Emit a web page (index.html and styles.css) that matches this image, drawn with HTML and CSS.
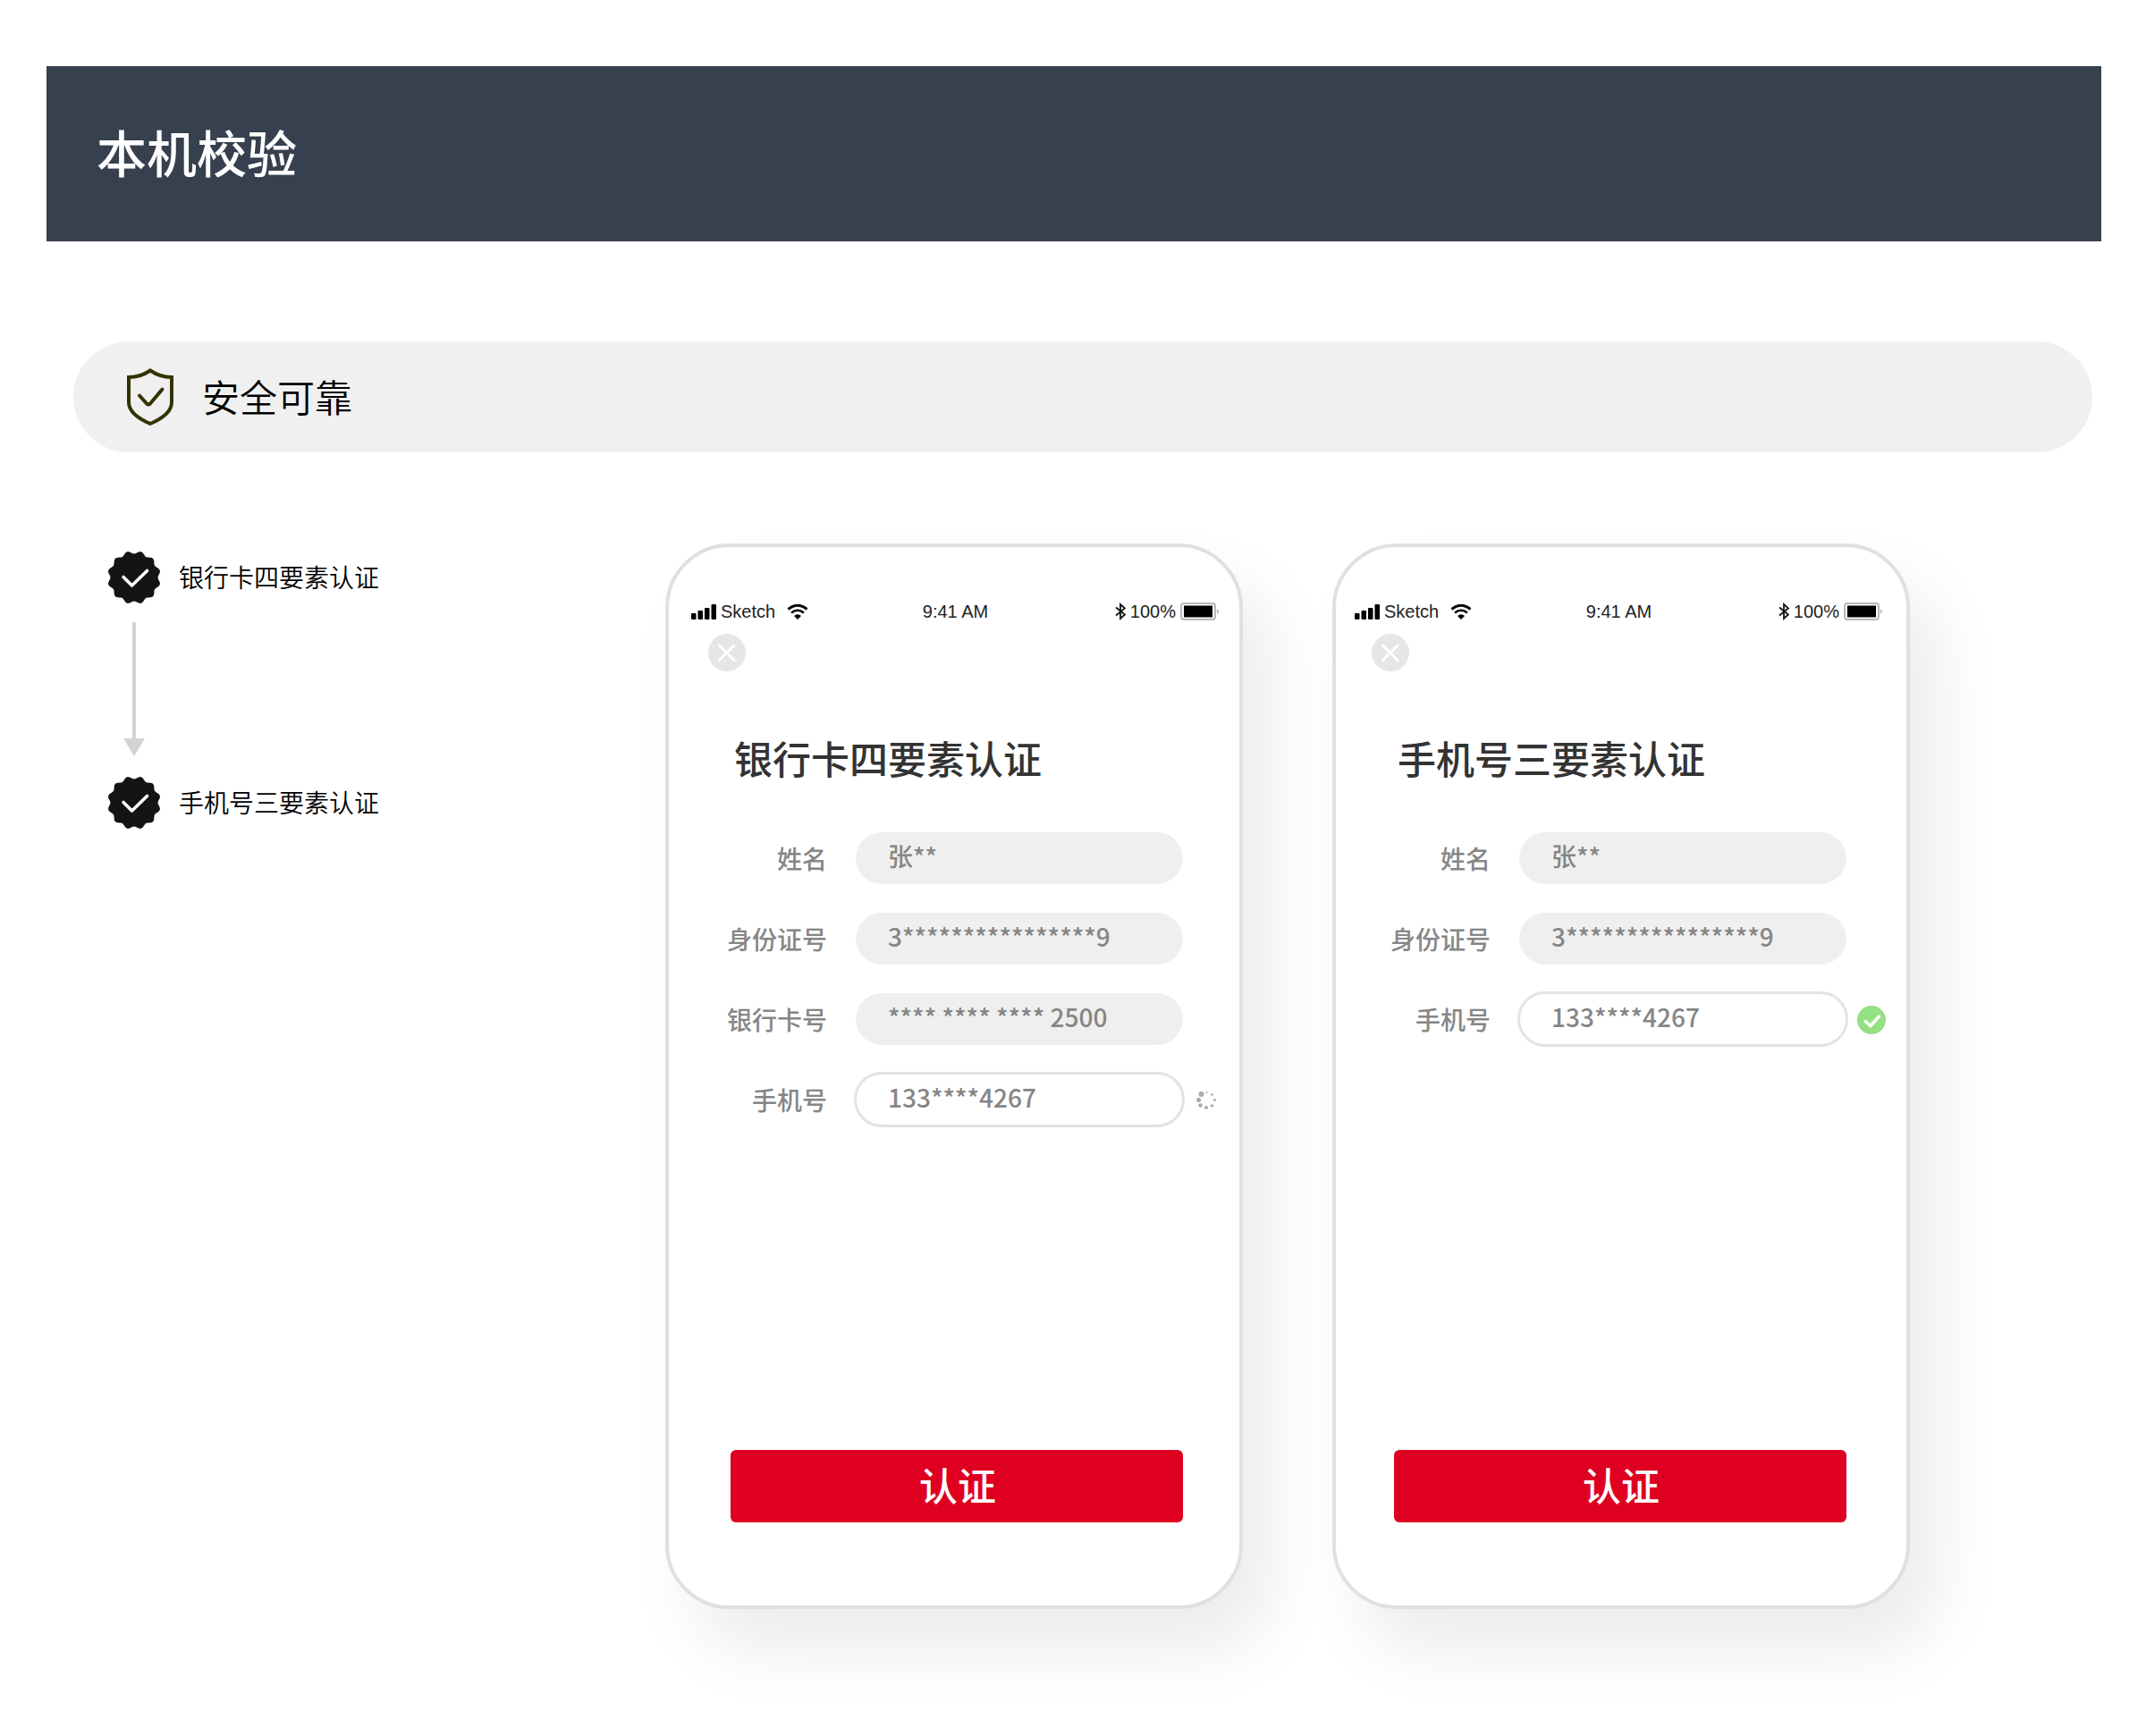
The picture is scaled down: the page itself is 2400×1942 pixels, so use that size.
FILE: index.html
```html
<!DOCTYPE html>
<html lang="zh-CN">

<head>
  <meta charset="UTF-8">
  <meta name="viewport" content="width=device-width, initial-scale=1.0">
  <title>本机校验</title>
  <link rel="stylesheet" href="styles.css">
</head>

<body>

  <!-- shared icons -->
  <svg class="sprite" aria-hidden="true">
    <symbol id="icon-badge" viewBox="0 0 58 58">
      <path id="badge-shape" fill="#131416" d=""/>
      <path d="M17 28.500 L26.500 38 L43.500 21.500" fill="none" stroke="#fff" stroke-width="3.600" stroke-linecap="round" stroke-linejoin="round"/>
    </symbol>
    <symbol id="icon-signal" viewBox="0 0 28 17">
      <rect x="0" y="10" width="5.500" height="7" rx="1"/>
      <rect x="7.500" y="7" width="5.500" height="10" rx="1"/>
      <rect x="15" y="4" width="5.500" height="13" rx="1"/>
      <rect x="22.500" y="0" width="5.500" height="17" rx="1"/>
    </symbol>
    <symbol id="icon-wifi" viewBox="0 0 24 17">
      <path d="M1.500 5.500 Q12 -3 22.500 5.500" fill="none" stroke="#000" stroke-width="3"/>
      <path d="M5 9.500 Q12 4 19 9.500" fill="none" stroke="#000" stroke-width="2.600"/>
      <path d="M8 13 Q12 9.500 16 13 L12 17 Z"/>
    </symbol>
    <symbol id="icon-bluetooth" viewBox="0 0 12 20">
      <path d="M1 5.500 L11 13.500 L6 18 V2 L11 6.500 L1 14.500" fill="none" stroke="#111" stroke-width="1.800"/>
    </symbol>
    <symbol id="icon-battery" viewBox="0 0 44 20">
      <rect x="1" y="1" width="38" height="18" rx="3" fill="#fff" stroke="#b8b8b8" stroke-width="2"/>
      <rect x="4" y="3.500" width="32" height="13"/>
      <path d="M41 7 Q45 10 41 13 Z" fill="#b8b8b8"/>
    </symbol>
    <symbol id="icon-close" viewBox="0 0 42 42">
      <circle cx="21" cy="21" r="21" fill="#e6e6e6"/>
      <path d="M12.500 13 L29 29.500 M29 13 L12.500 29.500" fill="none" stroke="#fff" stroke-width="3" stroke-linecap="round"/>
    </symbol>
  </svg>

  <header class="banner">
    <h1>本机校验</h1>
  </header>

  <main>
    <div class="feature">
      <svg class="shield" viewBox="0 0 52 64" aria-hidden="true">
        <path d="M26 2.500 Q37 10 50 10 V38 C50 49 40 56 26 62 C12 56 2 49 2 38 V10 Q15 10 26 2.500 Z" fill="none" stroke="#333300" stroke-width="4"/>
        <path d="M14 30.500 L22 39.500 Q24 41.500 26 39.500 L39.500 23.500" fill="none" stroke="#333300" stroke-width="4" stroke-linecap="round"/>
      </svg>
      <h2>安全可靠</h2>
    </div>

    <div class="content">
      <ol class="steps">
        <li>
          <svg class="badge" aria-hidden="true"><use href="#icon-badge"/></svg>
          <span>银行卡四要素认证</span>
        </li>
        <li class="arrow" aria-hidden="true">
          <svg viewBox="0 0 24 150"><path d="M10 0 H14 V130 H24 L12 150 L0 130 H10 Z" fill="#d3d3d3"/></svg>
        </li>
        <li>
          <svg class="badge" aria-hidden="true"><use href="#icon-badge"/></svg>
          <span>手机号三要素认证</span>
        </li>
      </ol>

      <section class="phone phone-bank">
        <div class="status-bar">
          <div class="carrier">
            <svg class="signal" aria-hidden="true"><use href="#icon-signal"/></svg>
            <span>Sketch</span>
            <svg class="wifi" aria-hidden="true"><use href="#icon-wifi"/></svg>
          </div>
          <span class="time">9:41 AM</span>
          <div class="power">
            <svg class="bluetooth" aria-hidden="true"><use href="#icon-bluetooth"/></svg>
            <span>100%</span>
            <svg class="battery" aria-hidden="true"><use href="#icon-battery"/></svg>
          </div>
        </div>
        <button type="button" class="close" aria-label="关闭">
          <svg aria-hidden="true"><use href="#icon-close"/></svg>
        </button>
        <form class="verify-form">
          <h3>银行卡四要素认证</h3>
          <div class="field">
            <label for="bank-name">姓名</label>
            <input type="text" id="bank-name" value="张**" readonly>
          </div>
          <div class="field">
            <label for="bank-id">身份证号</label>
            <input type="text" id="bank-id" value="3****************9" readonly>
          </div>
          <div class="field">
            <label for="bank-card">银行卡号</label>
            <input type="text" id="bank-card" value="**** **** **** 2500" readonly>
          </div>
          <div class="field">
            <label for="bank-phone">手机号</label>
            <input type="text" id="bank-phone" class="active" value="133****4267">
            <svg class="spinner" viewBox="0 0 22 22" aria-hidden="true">
              <g fill="#aaa">
                <circle cx="5.500" cy="4" r="3"/>
                <circle cx="2.500" cy="10.500" r="2.500"/>
                <circle cx="4.500" cy="16.500" r="2.300"/>
                <circle cx="11" cy="19" r="2"/>
                <circle cx="17.500" cy="17" r="1.800"/>
                <circle cx="20.500" cy="10.500" r="1.500"/>
                <circle cx="17.500" cy="4.500" r="1.300"/>
                <circle cx="11.500" cy="2" r="1"/>
              </g>
            </svg>
          </div>
          <button type="button" class="submit">认证</button>
        </form>
      </section>

      <section class="phone phone-mobile">
        <div class="status-bar">
          <div class="carrier">
            <svg class="signal" aria-hidden="true"><use href="#icon-signal"/></svg>
            <span>Sketch</span>
            <svg class="wifi" aria-hidden="true"><use href="#icon-wifi"/></svg>
          </div>
          <span class="time">9:41 AM</span>
          <div class="power">
            <svg class="bluetooth" aria-hidden="true"><use href="#icon-bluetooth"/></svg>
            <span>100%</span>
            <svg class="battery" aria-hidden="true"><use href="#icon-battery"/></svg>
          </div>
        </div>
        <button type="button" class="close" aria-label="关闭">
          <svg aria-hidden="true"><use href="#icon-close"/></svg>
        </button>
        <form class="verify-form">
          <h3>手机号三要素认证</h3>
          <div class="field">
            <label for="mobile-name">姓名</label>
            <input type="text" id="mobile-name" value="张**" readonly>
          </div>
          <div class="field">
            <label for="mobile-id">身份证号</label>
            <input type="text" id="mobile-id" value="3****************9" readonly>
          </div>
          <div class="field">
            <label for="mobile-phone">手机号</label>
            <input type="text" id="mobile-phone" class="active" value="133****4267">
            <svg class="passed" viewBox="0 0 32 32" aria-hidden="true">
              <circle cx="16" cy="16" r="16" fill="#93e183"/>
              <path d="M9 17.500 L15 22.500 L24.500 12" fill="none" stroke="#fff" stroke-width="3.500" stroke-linecap="round"/>
            </svg>
          </div>
          <button type="button" class="submit">认证</button>
        </form>
      </section>
    </div>
  </main>

  <script>
    // wavy outline of the badge: 12 rounded bumps around the circle
    const bumps = 12;
    const points = [];

    for (let i = 0; i < 360; i++) {
      const angle = i / 360 * Math.PI * 2;
      const radius = 28.2 - 1.6 * Math.cos(angle * bumps);
      points.push((29 + radius * Math.cos(angle)).toFixed(2) + ' ' + (29 + radius * Math.sin(angle)).toFixed(2));
    }

    document.querySelector('#badge-shape').setAttribute('d', 'M' + points.join(' L') + ' Z');
  </script>
</body>

</html>
```

FILE: styles.css
```css
* {
  box-sizing: border-box;
}

body {
  margin: 0;
  padding: 74px 50px 140px 52px;
  background-color: white;
  color: black;
  font-family: "Noto Sans CJK SC", "Noto Sans", sans-serif;
}

h1,
h2,
h3 {
  margin: 0;
}

svg {
  display: block;
  flex-shrink: 0;
}

.sprite {
  position: absolute;
  width: 0;
  height: 0;
}

.banner {
  display: flex;
  align-items: center;
  height: 196px;
  padding: 0 56px 6px;
  background-color: #37404e;
  color: white;
}

.banner h1 {
  font-size: 56px;
  font-weight: 500;
  line-height: 80px;
}

main {
  padding: 112px 10px 0 30px;
}

.feature {
  display: flex;
  align-items: center;
  gap: 32px;
  height: 124px;
  padding: 0 60px;
  border-radius: 62px;
  background-color: #f0f0f0;
}

.feature h2 {
  padding-bottom: 2px;
  font-size: 42px;
  font-weight: 350;
  line-height: 60px;
}

.shield {
  width: 52px;
  height: 64px;
}

.content {
  display: flex;
  align-items: flex-start;
  margin-top: 102px;
  padding-left: 39px;
}

/* steps on the left */

.steps {
  width: 623px;
  margin: 0;
  padding: 9px 0 0;
  list-style: none;
  font-size: 28px;
  font-weight: 350;
  line-height: 40px;
}

.steps li {
  display: flex;
  align-items: center;
  gap: 21px;
}

.steps span {
  padding-bottom: 2px;
}

.badge {
  width: 58px;
  height: 58px;
}

.steps .arrow {
  padding: 21px 17px 23px;
}

.arrow svg {
  width: 24px;
  height: 150px;
}

/* phones */

.phone {
  display: flex;
  flex-direction: column;
  flex-shrink: 0;
  width: 646px;
  min-height: 1192px;
  margin-right: 100px;
  border: 4px solid #e0e0e0;
  border-radius: 72px;
  background-color: white;
  box-shadow: 32px 46px 74px rgba(0, 0, 0, 0.08);
}

.phone-bank {
  padding: 60px 22px 93px 25px;
}

.phone-mobile {
  margin-right: 0;
  padding: 60px 26px 93px 21px;
}

.status-bar {
  display: grid;
  grid-template-columns: 1fr auto 1fr;
  align-items: center;
  height: 24px;
  font-family: "Liberation Sans", Arial, sans-serif;
  font-size: 20px;
  line-height: 24px;
  color: #222;
}

.carrier,
.power {
  display: flex;
  align-items: center;
  gap: 5px;
}

.power {
  justify-content: flex-end;
}

.signal {
  width: 28px;
  height: 17px;
}

.wifi {
  width: 24px;
  height: 17px;
  margin-left: 8px;
}

.bluetooth {
  width: 12px;
  height: 20px;
}

.battery {
  width: 44px;
  height: 20px;
}

.close {
  width: 42px;
  height: 42px;
  margin: 13px 0 0 19px;
  padding: 0;
  border: none;
  border-radius: 50%;
  background: none;
  cursor: pointer;
}

.close svg {
  width: 42px;
  height: 42px;
}

.verify-form {
  display: flex;
  flex-direction: column;
  flex-grow: 1;
  padding: 66px 0 0 40px;
}

.verify-form h3 {
  margin: 0 0 51px 8px;
  font-size: 43px;
  font-weight: 500;
  line-height: 60px;
  color: #333;
}

.field {
  display: flex;
  align-items: center;
  height: 64px;
  margin-bottom: 26px;
  font-size: 28px;
  font-weight: 500;
  color: #868686;
}

.field label {
  flex-shrink: 0;
  width: 112px;
  margin-right: 30px;
  text-align: right;
}

.field input {
  flex-shrink: 0;
  width: 370px;
  height: 62px;
  padding: 0 36px 6px;
  border: 2px solid white;
  border-radius: 31px;
  background-color: #efefef;
  background-clip: padding-box;
  font-family: inherit;
  font-size: 28px;
  font-weight: 500;
  color: #868686;
  outline: none;
}

.field input.active {
  border: 3px solid #e3e3e3;
  padding: 0 35px 6px;
  background-color: white;
}

.spinner {
  width: 22px;
  height: 22px;
  margin: 2px 0 0 13px;
}

.passed {
  width: 32px;
  height: 32px;
  margin: 2px 0 0 10px;
}

.submit {
  width: 506px;
  height: 81px;
  margin: auto 0 0 4px;
  padding: 0 0 6px 2px;
  border: none;
  border-radius: 6px;
  background-color: #df0021;
  color: white;
  font-family: inherit;
  font-size: 43px;
  font-weight: 500;
  cursor: pointer;
}
```
